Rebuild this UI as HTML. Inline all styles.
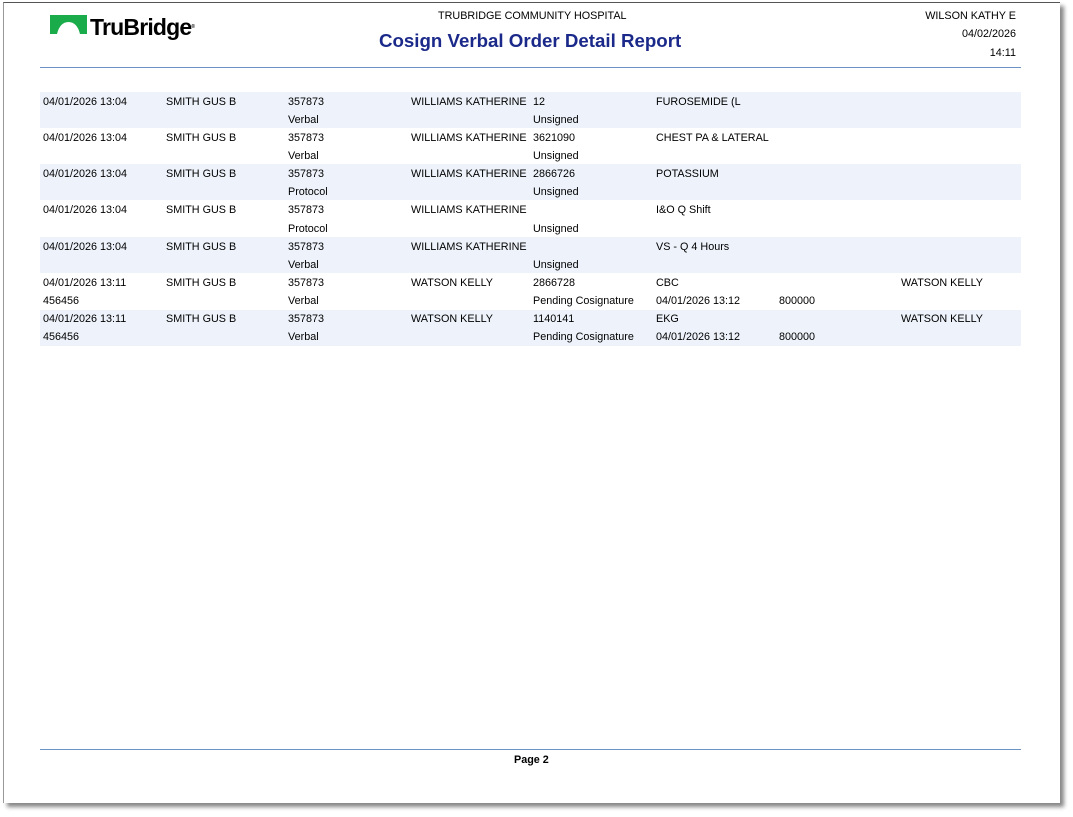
<!DOCTYPE html>
<html><head><style>
body{margin:0;width:1073px;height:817px;background:#fff;position:relative;overflow:hidden;font-family:"Liberation Sans",Arial,sans-serif;color:#000}
.page{position:absolute;left:3px;top:2px;width:1056px;height:800px;background:#fff;border-top:1px solid #555;border-left:1px solid #999;box-shadow:4px 4px 4px #888}
.t{position:absolute;font-size:10.8px;white-space:nowrap;line-height:12px;margin-top:1px}
.row{position:absolute;left:40px;width:981px;height:36px}
.b{background:#eef3fb}
.hr{position:absolute;left:40px;width:981px;height:1px;background:#6b93c4}
</style></head><body>
<div class="page"></div>
<svg style="position:absolute;left:50px;top:15px" width="37" height="19" viewBox="0 0 37 19"><path d="M0 0H37V19H30Q27 7 18.5 7Q10 7 7 19H0Z" fill="#1aab4a"/></svg>
<div class="t" style="left:90px;top:12px;font-size:23px;line-height:28px;font-weight:bold;letter-spacing:-0.8px">TruBridge<sup style="font-size:5px;vertical-align:top">®</sup></div>
<div class="t" style="left:438px;top:9px">TRUBRIDGE COMMUNITY HOSPITAL</div>
<div class="t" style="left:379px;top:30px;font-size:18.7px;line-height:20px;font-weight:bold;color:#1b2a8a">Cosign Verbal Order Detail Report</div>
<div class="t" style="right:57px;top:9px">WILSON KATHY E</div>
<div class="t" style="right:57px;top:27px">04/02/2026</div>
<div class="t" style="right:57px;top:46px">14:11</div>
<div class="hr" style="top:67px"></div>

<div class="row b" style="top:92px"></div>
<div class="row b" style="top:164px"></div>
<div class="row b" style="top:237px"></div>
<div class="row b" style="top:310px"></div>

<div class="t" style="left:43px;top:95px">04/01/2026 13:04</div><div class="t" style="left:166px;top:95px">SMITH GUS B</div><div class="t" style="left:288px;top:95px">357873</div><div class="t" style="left:411px;top:95px">WILLIAMS KATHERINE</div><div class="t" style="left:533px;top:95px">12</div><div class="t" style="left:656px;top:95px">FUROSEMIDE (L</div>
<div class="t" style="left:288px;top:113px">Verbal</div><div class="t" style="left:533px;top:113px">Unsigned</div>

<div class="t" style="left:43px;top:131px">04/01/2026 13:04</div><div class="t" style="left:166px;top:131px">SMITH GUS B</div><div class="t" style="left:288px;top:131px">357873</div><div class="t" style="left:411px;top:131px">WILLIAMS KATHERINE</div><div class="t" style="left:533px;top:131px">3621090</div><div class="t" style="left:656px;top:131px">CHEST PA &amp; LATERAL</div>
<div class="t" style="left:288px;top:149px">Verbal</div><div class="t" style="left:533px;top:149px">Unsigned</div>

<div class="t" style="left:43px;top:167px">04/01/2026 13:04</div><div class="t" style="left:166px;top:167px">SMITH GUS B</div><div class="t" style="left:288px;top:167px">357873</div><div class="t" style="left:411px;top:167px">WILLIAMS KATHERINE</div><div class="t" style="left:533px;top:167px">2866726</div><div class="t" style="left:656px;top:167px">POTASSIUM</div>
<div class="t" style="left:288px;top:185px">Protocol</div><div class="t" style="left:533px;top:185px">Unsigned</div>

<div class="t" style="left:43px;top:203px">04/01/2026 13:04</div><div class="t" style="left:166px;top:203px">SMITH GUS B</div><div class="t" style="left:288px;top:203px">357873</div><div class="t" style="left:411px;top:203px">WILLIAMS KATHERINE</div><div class="t" style="left:656px;top:203px">I&amp;O Q Shift</div>
<div class="t" style="left:288px;top:222px">Protocol</div><div class="t" style="left:533px;top:222px">Unsigned</div>

<div class="t" style="left:43px;top:240px">04/01/2026 13:04</div><div class="t" style="left:166px;top:240px">SMITH GUS B</div><div class="t" style="left:288px;top:240px">357873</div><div class="t" style="left:411px;top:240px">WILLIAMS KATHERINE</div><div class="t" style="left:656px;top:240px">VS - Q 4 Hours</div>
<div class="t" style="left:288px;top:258px">Verbal</div><div class="t" style="left:533px;top:258px">Unsigned</div>

<div class="t" style="left:43px;top:276px">04/01/2026 13:11</div><div class="t" style="left:166px;top:276px">SMITH GUS B</div><div class="t" style="left:288px;top:276px">357873</div><div class="t" style="left:411px;top:276px">WATSON KELLY</div><div class="t" style="left:533px;top:276px">2866728</div><div class="t" style="left:656px;top:276px">CBC</div><div class="t" style="left:901px;top:276px">WATSON KELLY</div>
<div class="t" style="left:43px;top:294px">456456</div><div class="t" style="left:288px;top:294px">Verbal</div><div class="t" style="left:533px;top:294px">Pending Cosignature</div><div class="t" style="left:656px;top:294px">04/01/2026 13:12</div><div class="t" style="left:779px;top:294px">800000</div>

<div class="t" style="left:43px;top:312px">04/01/2026 13:11</div><div class="t" style="left:166px;top:312px">SMITH GUS B</div><div class="t" style="left:288px;top:312px">357873</div><div class="t" style="left:411px;top:312px">WATSON KELLY</div><div class="t" style="left:533px;top:312px">1140141</div><div class="t" style="left:656px;top:312px">EKG</div><div class="t" style="left:901px;top:312px">WATSON KELLY</div>
<div class="t" style="left:43px;top:330px">456456</div><div class="t" style="left:288px;top:330px">Verbal</div><div class="t" style="left:533px;top:330px">Pending Cosignature</div><div class="t" style="left:656px;top:330px">04/01/2026 13:12</div><div class="t" style="left:779px;top:330px">800000</div>

<div class="hr" style="top:749px"></div>
<div class="t" style="left:514px;top:753px;font-weight:bold">Page 2</div>
</body></html>
